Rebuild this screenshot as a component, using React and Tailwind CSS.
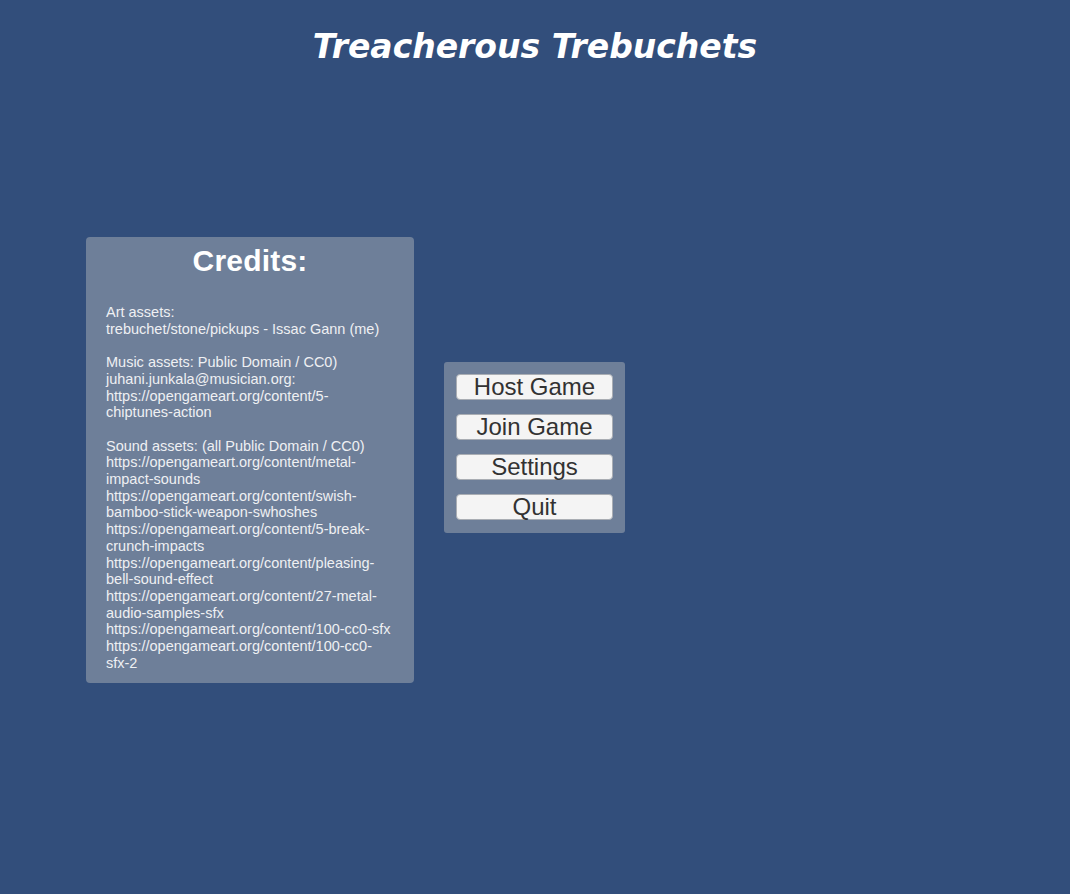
export default function App() {
  const lines = [
    "Art assets:",
    "trebuchet/stone/pickups - Issac Gann (me)",
    "",
    "Music assets: Public Domain / CC0)",
    "juhani.junkala@musician.org:",
    "https://opengameart.org/content/5-chiptunes-action",
    "",
    "Sound assets: (all Public Domain / CC0)",
    "https://opengameart.org/content/metal-impact-sounds",
    "https://opengameart.org/content/swish-bamboo-stick-weapon-swhoshes",
    "https://opengameart.org/content/5-break-crunch-impacts",
    "https://opengameart.org/content/pleasing-bell-sound-effect",
    "https://opengameart.org/content/27-metal-audio-samples-sfx",
    "https://opengameart.org/content/100-cc0-sfx",
    "https://opengameart.org/content/100-cc0-sfx-2",
  ];
  const buttons = ["Host Game", "Join Game", "Settings", "Quit"];
  return (
    <div className="w-[1070px] h-[894px] bg-[#324e7b] overflow-hidden flex flex-col" style={{ fontFamily: '"Liberation Sans", Arial, sans-serif' }}>
      <div className="pt-[27px] flex justify-center">
        <h1 className="text-[33px] leading-[40px] italic font-bold text-white" style={{ fontFamily: '"DejaVu Sans", Verdana, sans-serif' }}>
          Treacherous Trebuchets
        </h1>
      </div>
      <div className="flex items-start mt-[170px] pl-[86px]">
        <div className="w-[328px] h-[446px] bg-[#6e7f99] rounded-[4px] pt-[6px] px-[20px]">
          <h2 className="text-center text-white font-bold text-[30px] leading-[36px] tracking-[0.2px]">Credits:</h2>
          <div className="mt-[25px] text-[14.5px] leading-[16.7px] text-[#eef0f3] w-[287px] break-words">
            {lines.map((l, i) =>
              l === "" ? <div key={i} className="h-[16.7px]" /> : <div key={i}>{l}</div>
            )}
          </div>
        </div>
        <div className="ml-[30px] mt-[125px] w-[181px] h-[171px] bg-[#6e7f99] rounded-[3px] pt-[12px] px-[12px] flex flex-col gap-[14px]">
          {buttons.map((b) => (
            <button key={b} className="h-[26px] w-[157px] bg-[#f4f4f4] border border-[#a9adb3] rounded-[4px] text-[24px] leading-[24px] text-[#323232] flex items-center justify-center">
              {b}
            </button>
          ))}
        </div>
      </div>
    </div>
  );
}
